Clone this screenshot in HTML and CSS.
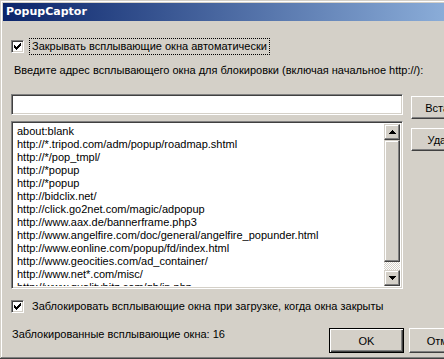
FILE: index.html
```html
<!DOCTYPE html>
<html lang="ru">
<head>
  <meta charset="UTF-8" />
  <title>PopupCaptor</title>
  <link rel="stylesheet" href="styles.css">
</head>
<body>
<div class="window">
  <div class="titlebar">PopupCaptor</div>

  <div class="content">
    <!-- === auto close === -->
    <div class="check-row first">
      <span class="checkbox">
        <svg width="13" height="13" viewBox="0 0 13 13"><path d="M3 5h1v3h-1zM4 6h1v3h-1zM5 7h1v3h-1zM6 6h1v3h-1zM7 5h1v3h-1zM8 4h1v3h-1zM9 3h1v3h-1z" fill="#000"/></svg>
      </span>
      <span class="check-label focused">Закрывать всплывающие окна автоматически</span>
    </div>

    <div class="hint">Введите адрес всплывающего окна для блокировки (включая начальное http://):</div>

    <!-- === address list === -->
    <div class="edit-area">
      <input type="text" class="field" />
      <button class="btn btn-top">Вставить</button>

      <div class="listbox">
        <div class="items">
          <div class="item">about:blank</div>
          <div class="item">http://*.tripod.com/adm/popup/roadmap.shtml</div>
          <div class="item">http://*/pop_tmpl/</div>
          <div class="item">http://*popup</div>
          <div class="item">http://*popup</div>
          <div class="item">http://bidclix.net/</div>
          <div class="item">http://click.go2net.com/magic/adpopup</div>
          <div class="item">http://www.aax.de/bannerframe.php3</div>
          <div class="item">http://www.angelfire.com/doc/general/angelfire_popunder.html</div>
          <div class="item">http://www.eonline.com/popup/fd/index.html</div>
          <div class="item">http://www.geocities.com/ad_container/</div>
          <div class="item">http://www.net*.com/misc/</div>
          <div class="item">http://www.qualitybitz.com/gb/in.php</div>
        </div>
        <div class="scrollbar">
          <div class="sb-btn">
            <svg width="7" height="4" viewBox="0 0 7 4"><path d="M3 0h1v1h1v1h1v1h1v1h-7v-1h1v-1h1v-1h1z" fill="#000"/></svg>
          </div>
          <div class="sb-thumb"></div>
          <div class="sb-track"></div>
          <div class="sb-btn">
            <svg width="7" height="4" viewBox="0 0 7 4"><path d="M0 0h7v1h-1v1h-1v1h-1v1h-1v-1h-1v-1h-1v-1h-1z" fill="#000"/></svg>
          </div>
        </div>
      </div>
      <button class="btn btn-remove">Удалить</button>
    </div>

    <!-- === block on load === -->
    <div class="check-row second">
      <span class="checkbox">
        <svg width="13" height="13" viewBox="0 0 13 13"><path d="M3 5h1v3h-1zM4 6h1v3h-1zM5 7h1v3h-1zM6 6h1v3h-1zM7 5h1v3h-1zM8 4h1v3h-1zM9 3h1v3h-1z" fill="#000"/></svg>
      </span>
      <span class="check-label">Заблокировать всплывающие окна при загрузке, когда окна закрыты</span>
    </div>

    <div class="footer">
      <span class="status">Заблокированные всплывающие окна: 16</span>
      <button class="btn default">OK</button>
      <button class="btn">Отмена</button>
    </div>
  </div>
</div>
</body>
</html>
```

FILE: styles.css
```css
* {
  box-sizing: border-box;
}

body {
  margin: 0;
  width: 444px;
  height: 359px;
  overflow: hidden;
  background-color: #D4D0C8;
  font-family: 'Liberation Sans', Arial, sans-serif;
  font-size: 11px;
  color: #000000;
}

/* ===== Window frame ===== */
.window {
  width: 540px;
  height: 359px;
  padding: 3px 0 0 3px;
  background-color: #D4D0C8;
  box-shadow: inset 1px 1px #D4D0C8, inset 2px 2px #FFFFFF;
  border-bottom: 1px solid #404040;
  position: relative;
}

.window::after {
  content: "";
  position: absolute;
  left: 1px;
  right: 0;
  bottom: 0;
  height: 1px;
  background-color: #808080;
}

.titlebar {
  height: 18px;
  padding: 2px 0 0 3px;
  background: linear-gradient(to right, #0A246A, #A6CAF0);
  color: #FFFFFF;
  font-family: 'DejaVu Sans', sans-serif;
  font-weight: bold;
  font-size: 11px;
  line-height: 14px;
}

.content {
  padding-left: 8px;
}

/* ===== Checkboxes ===== */
.check-row {
  display: flex;
  align-items: center;
  height: 17px;
}

.check-row.first {
  margin-top: 17px;
}

.check-row.second {
  margin-top: 9px;
}

.checkbox {
  width: 13px;
  height: 13px;
  background-color: #FFFFFF;
  border: 1px solid;
  border-color: #808080 #FFFFFF #FFFFFF #808080;
  box-shadow: inset 1px 1px #404040, inset -1px -1px #D4D0C8;
  position: relative;
  flex-shrink: 0;
}

.checkbox svg {
  position: absolute;
  left: -1px;
  top: -1px;
}

.check-label {
  margin-left: 5px;
  padding: 1px 2px;
  line-height: 13px;
  border: 1px solid transparent;
}

.check-label.focused {
  border: 1px dotted #000000;
}

.hint {
  margin: 9px 0 0 3px;
  line-height: 13px;
}

/* ===== Edit area ===== */
.edit-area {
  display: grid;
  grid-template-columns: 392px 75px;
  column-gap: 8px;
  align-items: start;
  margin-top: 17px;
}

.field {
  display: block;
  width: 392px;
  height: 21px;
  margin: 0;
  padding: 0 3px;
  background-color: #FFFFFF;
  border: 1px solid;
  border-color: #808080 #FFFFFF #FFFFFF #808080;
  box-shadow: inset 1px 1px #404040, inset -1px -1px #D4D0C8;
  font: inherit;
  outline: none;
}

.btn {
  height: 23px;
  width: 75px;
  margin: 0;
  padding: 0;
  background-color: #D4D0C8;
  border: 1px solid;
  border-color: #FFFFFF #404040 #404040 #FFFFFF;
  box-shadow: inset -1px -1px #808080, inset 1px 1px #D4D0C8;
  font: inherit;
  color: #000000;
  text-align: center;
}

.btn-top {
  margin-top: 2px;
}

.btn-remove {
  margin-top: 9px;
}

/* ===== List box ===== */
.listbox {
  display: flex;
  height: 168px;
  margin-top: 2px;
  background-color: #FFFFFF;
  border: 1px solid;
  border-color: #808080 #FFFFFF #FFFFFF #808080;
  box-shadow: inset 1px 1px #404040, inset -1px -1px #D4D0C8;
  padding: 2px;
}

.items {
  flex-grow: 1;
  overflow: hidden;
  padding: 1px 0 0 3px;
  white-space: nowrap;
}

.item {
  height: 13px;
  line-height: 13px;
}

.scrollbar {
  width: 16px;
  display: flex;
  flex-direction: column;
}

.sb-btn, .sb-thumb {
  background-color: #D4D0C8;
  border: 1px solid;
  border-color: #D4D0C8 #404040 #404040 #D4D0C8;
  box-shadow: inset -1px -1px #808080, inset 1px 1px #FFFFFF;
}

.sb-btn {
  height: 16px;
  display: flex;
  align-items: center;
  justify-content: center;
}

.sb-thumb {
  height: 122px;
}

.sb-track {
  flex-grow: 1;
  background: repeating-conic-gradient(#FFFFFF 0 25%, #D4D0C8 0 50%) 0 0 / 2px 2px;
}

/* ===== Footer ===== */
.footer {
  display: flex;
  align-items: flex-start;
  margin-top: 13px;
}

.status {
  width: 318px;
  padding-left: 1px;
  line-height: 13px;
}

.footer .btn {
  height: 25px;
  margin-right: 5px;
}

.btn.default {
  border: 1px solid #000000;
  box-shadow: inset 1px 1px #FFFFFF, inset -1px -1px #404040, inset -2px -2px #808080;
}
```
